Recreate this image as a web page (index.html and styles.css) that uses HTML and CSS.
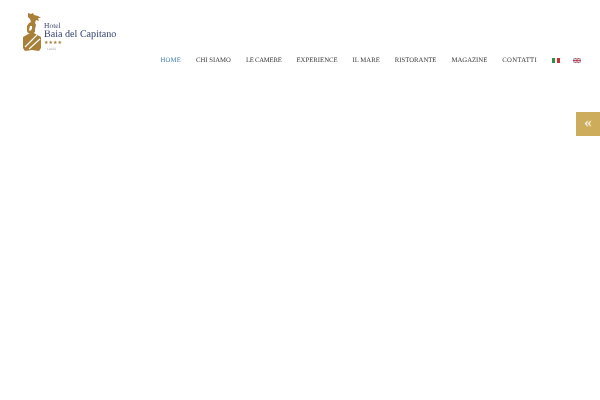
FILE: index.html
```html
<!DOCTYPE html>
<html lang="it">
<head>
<meta charset="utf-8">
<title>Hotel Baia del Capitano</title>
<link rel="stylesheet" href="styles.css">
</head>
<body>
<header class="header">
  <a class="logo" href="#">
    <svg class="logo-mark" width="19" height="40" viewBox="0 0 19 40">
      <path fill="#a9803a" d="M5 1l3 1 2-1 1 2 4 1 3 2-3 0 1 3-3-1-1 3 1 2-1 4 0 3-3 2-4-1-1-2 0-5 2-3 2-1-1-3-2-2z"/>
      <path fill="#fff" d="M7 14l2 0 0 3-2 2-1-1z"/>
      <path fill="#a9803a" d="M0 25l9-5 9 5 0 11-2 3-7-1-7 1-2-3z"/>
      <path fill="none" stroke="#fff" stroke-width="1.100" d="M2 35L14 23M6 37L17 27"/>
    </svg>
    <span class="logo-text">
      <span class="logo-hotel">Hotel</span>
      <span class="logo-name">Baia del Capitano</span>
      <span class="logo-stars">★★★★</span>
      <span class="logo-place">Cefalù</span>
    </span>
  </a>
  <nav class="nav">
    <a class="nav-item active" href="#">HOME</a>
    <a class="nav-item" href="#">CHI SIAMO</a>
    <a class="nav-item tight" href="#">LE CAMERE</a>
    <a class="nav-item" href="#">EXPERIENCE</a>
    <a class="nav-item" href="#">IL MARE</a>
    <a class="nav-item" href="#">RISTORANTE</a>
    <a class="nav-item" href="#">MAGAZINE</a>
    <a class="nav-item loose" href="#">CONTATTI</a>
    <svg class="flag" width="8" height="5" viewBox="0 0 8 5"><rect width="3" height="5" fill="#2f8f46"/><rect x="3" width="2" height="5" fill="#f2f2f2"/><rect x="5" width="3" height="5" fill="#c8323a"/></svg>
    <svg class="flag flag-last" width="8" height="5" viewBox="0 0 8 5"><rect width="8" height="5" fill="#6a6f98"/><path d="M0 0l8 5M8 0L0 5" stroke="#f0dcdc" stroke-width="1"/><path d="M4 0v5M0 2.500h8" stroke="#f0e6e6" stroke-width="2"/><path d="M4 0v5M0 2.500h8" stroke="#c8404a" stroke-width="1"/></svg>
  </nav>
</header>
<a class="side-tab" href="#">«</a>
</body>
</html>
```
FILE: styles.css
```css
html, body {
  margin: 0;
  padding: 0;
  background: #fff;
}
body {
  width: 600px;
  height: 400px;
  overflow: hidden;
  position: relative;
  font-family: "Liberation Serif", serif;
  text-rendering: geometricPrecision;
}
a {
  text-decoration: none;
  color: inherit;
}
.header {
  display: flex;
  justify-content: space-between;
  align-items: flex-start;
  padding: 12px 19px 0 23px;
  will-change: transform;
}
.logo {
  display: flex;
  align-items: flex-start;
  gap: 2px;
}
.logo-mark {
  flex: none;
}
.logo-text {
  display: flex;
  flex-direction: column;
  padding-top: 10px;
}
.logo-hotel {
  font-size: 7.500px;
  line-height: 8px;
  color: #3c4568;
}
.logo-name {
  font-size: 10.100px;
  line-height: 10px;
  color: #33406e;
  white-space: nowrap;
}
.logo-stars {
  font-family: "DejaVu Sans", sans-serif;
  font-size: 5px;
  line-height: 7px;
  color: #a9803a;
}
.logo-place {
  font-size: 3.500px;
  line-height: 5px;
  color: #9a9aa5;
  padding-left: 3px;
}
.nav {
  display: flex;
  align-items: center;
  gap: 15px;
  margin-top: 43px;
  height: 12px;
}
.nav-item {
  font-size: 6.720px;
  line-height: 12px;
  color: #3a3a3a;
  white-space: nowrap;
}
.nav-item.active {
  color: #3f7fb0;
  letter-spacing: 0.200px;
}
.nav-item.tight {
  letter-spacing: -0.250px;
}
.nav-item.loose {
  letter-spacing: 0.300px;
}
.flag {
  flex: none;
  display: block;
  margin-top: -2px;
}
.flag-last {
  margin-left: -2px;
}
.side-tab {
  position: absolute;
  right: 0;
  top: 112px;
  width: 24px;
  height: 24px;
  background: #cdac5c;
  color: #fff;
  font-size: 15px;
  line-height: 22px;
  text-align: center;
}
```
